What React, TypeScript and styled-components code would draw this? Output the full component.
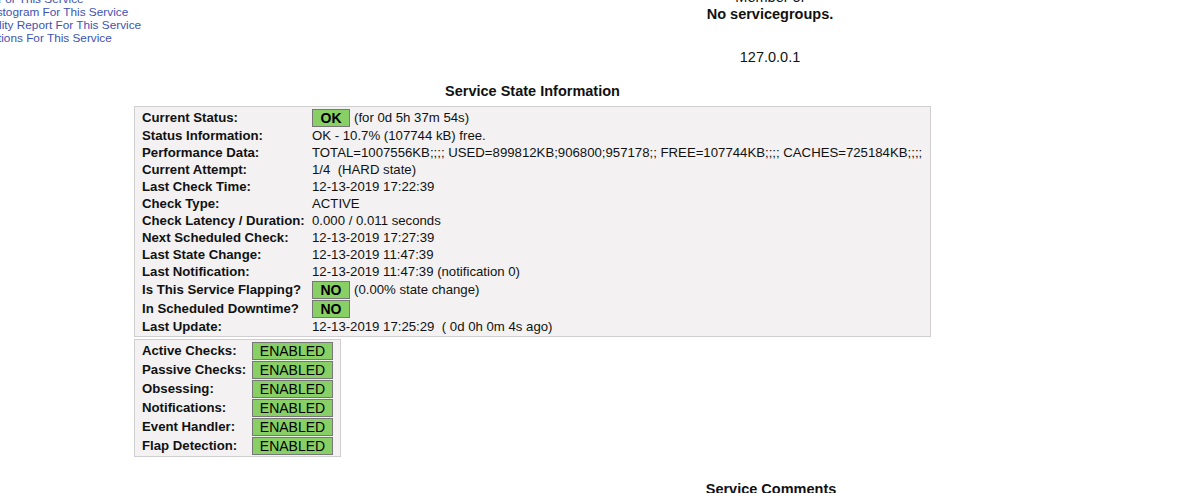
import styled, { createGlobalStyle } from "styled-components";

const GlobalStyle = createGlobalStyle`
  html, body {
    margin: 0;
    padding: 0;
    background: #ffffff;
    overflow: hidden;
    font-family: "Liberation Sans", Arial, sans-serif;
    color: #000;
  }
`;

const Page = styled.div`
  width: 1184px;
  height: 493px;
  overflow: hidden;
`;

const Top = styled.div`
  display: grid;
  grid-template-columns: 570px 400px;
  align-items: start;
`;

const Links = styled.div`
  margin-left: -70px;
  margin-top: -7px;
  display: flex;
  flex-direction: column;
`;

const ServiceLink = styled.a`
  font-size: 11.8px;
  line-height: 13px;
  color: #3e52b3;
  text-decoration: none;
  white-space: nowrap;
`;

const Center = styled.div`
  margin-top: -11px;
  text-align: center;
`;

const CenterLine = styled.div<{ $bold?: boolean; $gap?: number }>`
  font-size: 14.5px;
  line-height: 17px;
  font-weight: ${(p) => (p.$bold ? "bold" : "normal")};
  margin-top: ${(p) => p.$gap ?? 0}px;
  color: #111;
`;

const StateSection = styled.div`
  padding-left: 134px;
  width: 797px;
  margin-top: 16px;
`;

const DataTitle = styled.div`
  font-size: 14.5px;
  line-height: 18px;
  font-weight: bold;
  text-align: center;
  color: #111;
`;

const InfoTable = styled.div<{ $fit?: boolean }>`
  box-sizing: border-box;
  width: ${(p) => (p.$fit ? "fit-content" : "100%")};
  margin-top: ${(p) => (p.$fit ? 2 : 6)}px;
  border: 1px solid #cfcfcf;
  background: #f3f1f2;
  padding: 1px ${(p) => (p.$fit ? 7 : 0)}px 1px 7px;
  display: grid;
  grid-template-columns: ${(p) => (p.$fit ? "110px 81px" : "170px 1fr")};
  font-size: 13.2px;
`;

const Label = styled.div<{ $h: number }>`
  height: ${(p) => p.$h}px;
  line-height: ${(p) => p.$h}px;
  font-weight: bold;
  white-space: nowrap;
  color: #111;
`;

const Value = styled.div<{ $h: number }>`
  height: ${(p) => p.$h}px;
  line-height: ${(p) => p.$h}px;
  white-space: nowrap;
  display: flex;
  align-items: center;
  gap: 4px;
  color: #111;
`;

const StatusBox = styled.span<{ $wide?: boolean }>`
  box-sizing: border-box;
  display: inline-block;
  height: 18px;
  line-height: 16px;
  border: 1px solid #777;
  background: #88d066;
  text-align: center;
  color: #000;
  font-size: 14px;
  font-weight: ${(p) => (p.$wide ? "normal" : "bold")};
  width: ${(p) => (p.$wide ? "81px" : "38px")};
`;

const CommentsTitle = styled.div`
  width: 400px;
  margin-left: 571px;
  margin-top: 23px;
  font-size: 14.5px;
  line-height: 18px;
  font-weight: bold;
  text-align: center;
  color: #111;
`;

type Row = { label: string; h: number; box?: string; text?: string };

const stateRows: Row[] = [
  { label: "Current Status:", h: 19, box: "OK", text: "(for 0d 5h 37m 54s)" },
  { label: "Status Information:", h: 17, text: "OK - 10.7% (107744 kB) free." },
  {
    label: "Performance Data:",
    h: 17,
    text: "TOTAL=1007556KB;;;; USED=899812KB;906800;957178;; FREE=107744KB;;;; CACHES=725184KB;;;;",
  },
  { label: "Current Attempt:", h: 17, text: "1/4\u00a0\u00a0(HARD state)" },
  { label: "Last Check Time:", h: 17, text: "12-13-2019 17:22:39" },
  { label: "Check Type:", h: 17, text: "ACTIVE" },
  { label: "Check Latency / Duration:", h: 17, text: "0.000\u00a0/\u00a00.011 seconds" },
  { label: "Next Scheduled Check:", h: 17, text: "12-13-2019 17:27:39" },
  { label: "Last State Change:", h: 17, text: "12-13-2019 11:47:39" },
  { label: "Last Notification:", h: 17, text: "12-13-2019 11:47:39 (notification 0)" },
  { label: "Is This Service Flapping?", h: 19, box: "NO", text: "(0.00% state change)" },
  { label: "In Scheduled Downtime?", h: 19, box: "NO" },
  { label: "Last Update:", h: 17, text: "12-13-2019 17:25:29\u00a0\u00a0( 0d 0h 0m 4s ago)" },
];

const checkRows = [
  "Active Checks:",
  "Passive Checks:",
  "Obsessing:",
  "Notifications:",
  "Event Handler:",
  "Flap Detection:",
];

export default function App() {
  return (
    <Page>
      <GlobalStyle />
      <Top>
        <Links>
          <ServiceLink>View Trends For This Service</ServiceLink>
          <ServiceLink>View Alert Histogram For This Service</ServiceLink>
          <ServiceLink>View Availability Report For This Service</ServiceLink>
          <ServiceLink>View Notifications For This Service</ServiceLink>
        </Links>
        <Center>
          <CenterLine>Member of</CenterLine>
          <CenterLine $bold>No servicegroups.</CenterLine>
          <CenterLine $gap={26}>127.0.0.1</CenterLine>
        </Center>
      </Top>

      <StateSection>
        <DataTitle>Service State Information</DataTitle>
        <InfoTable>
          {stateRows.map((r) => (
            <>
              <Label key={r.label} $h={r.h}>
                {r.label}
              </Label>
              <Value $h={r.h}>
                {r.box && <StatusBox>{r.box}</StatusBox>}
                {r.text && <span>{r.text}</span>}
              </Value>
            </>
          ))}
        </InfoTable>
        <InfoTable $fit>
          {checkRows.map((l) => (
            <>
              <Label key={l} $h={19}>
                {l}
              </Label>
              <Value $h={19}>
                <StatusBox $wide>ENABLED</StatusBox>
              </Value>
            </>
          ))}
        </InfoTable>
      </StateSection>

      <CommentsTitle>Service Comments</CommentsTitle>
    </Page>
  );
}
